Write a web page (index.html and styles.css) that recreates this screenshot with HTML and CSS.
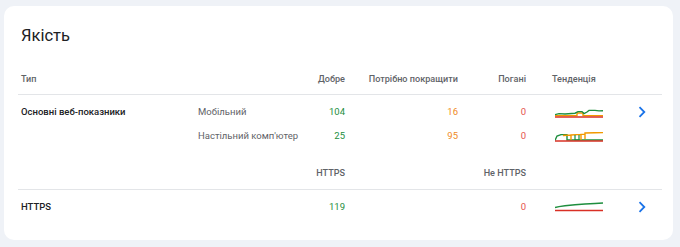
FILE: index.html
```html
<!DOCTYPE html>
<html lang="uk">
<head>
<meta charset="utf-8">
<title>Якість</title>
<link rel="stylesheet" href="styles.css">
</head>
<body>
<div class="card">
  <h1 class="title">Якість</h1>

  <div class="grid head">
    <div class="c1">Тип</div>
    <div class="c2"></div>
    <div class="num">Добре</div>
    <div class="num">Потрібно покращити</div>
    <div class="num">Погані</div>
    <div class="trend">Тенденція</div>
    <div></div>
  </div>

  <div class="group">
    <div class="grid row">
      <div class="c1 name">Основні веб-показники</div>
      <div class="c2">Мобільний</div>
      <div class="num good">104</div>
      <div class="num ni">16</div>
      <div class="num poor">0</div>
      <div class="trend">
        <svg class="spark" width="48" height="12" viewBox="0 0 48 12">
          <polyline points="0,9.6 22,9.6 22,7 28,7 28,9.6 48,9.6" fill="none" stroke="#f29900" stroke-width="1.4"/>
          <polyline points="0,8.6 4,7.6 10,8 20,7.2 23,5.6 27,5.6 29,7.6 32,6 34,4.4 40,4.4 44,4.9 48,4.7" fill="none" stroke="#1e8e3e" stroke-width="1.4"/>
          <line x1="0" y1="11" x2="48" y2="11" stroke="#d93025" stroke-width="1.4"/>
        </svg>
      </div>
      <div class="chev">
        <svg width="8" height="12" viewBox="0 0 8 12"><path d="M1.5 1.2 6.3 6 1.5 10.8" fill="none" stroke="#1a73e8" stroke-width="1.8"/></svg>
      </div>
    </div>
    <div class="grid row">
      <div class="c1"></div>
      <div class="c2">Настільний комп'ютер</div>
      <div class="num good">25</div>
      <div class="num ni">95</div>
      <div class="num poor">0</div>
      <div class="trend">
        <svg class="spark" width="48" height="12" viewBox="0 0 48 12">
          <polyline points="0,10.5 2,6 6,4.6 12,4.6 12,10 48,10" fill="none" stroke="#1e8e3e" stroke-width="1.4"/>
          <polyline points="8,5.5 16,5 16,10 16,5 26,4.4 26,10 26,4.4 30,4.4 30,9 30,3 40,2.8 48,2.6" fill="none" stroke="#f29900" stroke-width="1.4"/>
          <polyline points="20,5 20,10 24,10 24,5" fill="none" stroke="#1e8e3e" stroke-width="1.2"/>
          <line x1="0" y1="11" x2="48" y2="11" stroke="#d93025" stroke-width="1.4"/>
        </svg>
      </div>
      <div class="chev"></div>
    </div>
  </div>

  <div class="grid head head2">
    <div class="c1"></div>
    <div class="c2"></div>
    <div class="num">HTTPS</div>
    <div class="num"></div>
    <div class="num">Не HTTPS</div>
    <div class="trend"></div>
    <div></div>
  </div>

  <div class="group last">
    <div class="grid row">
      <div class="c1 name">HTTPS</div>
      <div class="c2"></div>
      <div class="num good">119</div>
      <div class="num"></div>
      <div class="num poor">0</div>
      <div class="trend">
        <svg class="spark" width="48" height="12" viewBox="0 0 48 12">
          <polyline points="0,6.5 4,5.6 10,4.8 20,3.8 30,3 40,2.5 48,2" fill="none" stroke="#1e8e3e" stroke-width="1.4"/>
          <line x1="0" y1="9.5" x2="48" y2="9.5" stroke="#d93025" stroke-width="1.4"/>
        </svg>
      </div>
      <div class="chev">
        <svg width="8" height="12" viewBox="0 0 8 12"><path d="M1.5 1.2 6.3 6 1.5 10.8" fill="none" stroke="#1a73e8" stroke-width="1.8"/></svg>
      </div>
    </div>
  </div>
</div>
</body>
</html>
```
FILE: styles.css
```css
html, body {
  margin: 0;
  background: #eff2f7;
}
body {
  padding: 6px 7px 7px 4px;
  font-family: Roboto, "Noto Sans", "Liberation Sans", sans-serif;
}
.card {
  box-sizing: border-box;
  width: 669px;
  height: 234px;
  background: #ffffff;
  border-radius: 10px;
  padding: 18px 11px 0 14px;
}
.title {
  margin: 0 0 0 3px;
  font-size: 16.5px;
  line-height: 24px;
  font-weight: 400;
  color: #202124;
}
.grid {
  display: grid;
  grid-template-columns: 177px 105px 48px 113px 68px 91px 42px;
  align-items: center;
  font-size: 9.5px;
  white-space: nowrap;
}
.grid > div {
  line-height: 14px;
}
.c1, .c2 {
  padding-left: 3px;
}
.num {
  text-align: right;
  padding-right: 3px;
}
.trend {
  padding-left: 23px;
  display: flex;
  align-items: center;
}
.head {
  margin-top: 16px;
  height: 31px;
  border-bottom: 1px solid #e3e5e8;
  box-sizing: border-box;
  color: #5f6368;
  font-weight: 500;
  font-size: 9.1px;
}
.head2 {
  margin-top: 0;
  height: 33px;
}
.group {
  padding: 5px 0 9px;
}
.group.last {
  padding-top: 5px;
}
.row {
  height: 24px;
}
.name {
  font-weight: 500;
  color: #202124;
}
.c2 {
  color: #5f6368;
}
.good { color: #1e8e3e; }
.ni { color: #f08a24; }
.poor { color: #e5534b; }
.spark {
  display: block;
  margin-left: 3px;
}
.chev {
  display: flex;
  align-items: center;
  padding-left: 18px;
}
.chev svg {
  display: block;
}
```
